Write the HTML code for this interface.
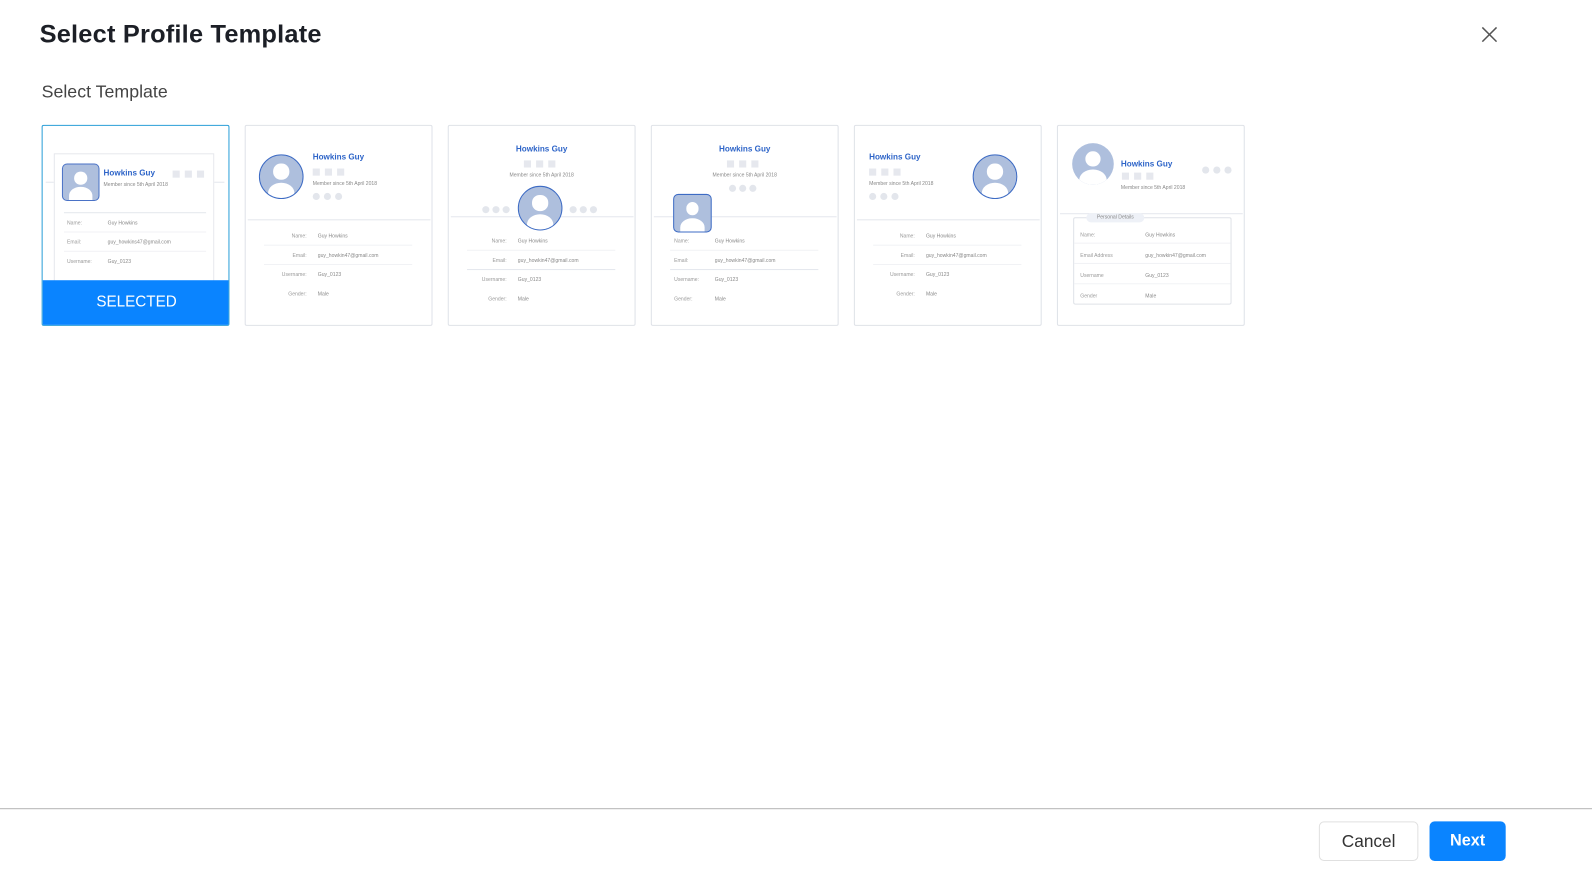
<!DOCTYPE html>
<html><head><meta charset="utf-8"><style>
*{margin:0;padding:0;box-sizing:border-box}
body{width:1592px;height:872px;background:#fff;font-family:"Liberation Sans",sans-serif;position:relative;overflow:hidden;color:#222}
#w{position:absolute;left:0;top:0;width:1568px;height:859px;transform:scale(1.0153);transform-origin:0 0}
.a{position:absolute}
.card{position:absolute;top:123px;width:185px;height:198px;border:1px solid #dfe2e8;border-radius:2px;background:#fff;overflow:hidden}
.n{position:absolute;font-size:8px;font-weight:bold;color:#2d64c8;white-space:nowrap}
.m{position:absolute;font-size:5px;color:#888;white-space:nowrap}
.sq{position:absolute;width:7px;height:7px;background:#e6e8ee}
.ci{position:absolute;width:7px;height:7px;border-radius:50%;background:#e3e6ec}
.l{position:absolute;font-size:5px;color:#999;white-space:nowrap}
.v{position:absolute;font-size:5px;color:#888;white-space:nowrap}
.ln{position:absolute;height:1px;background:#e4e7ed}
.lf{position:absolute;height:1px;background:#f1f2f5}
.av{position:absolute;background:#aebfdd;overflow:hidden}
.av:before{content:"";position:absolute;left:32%;top:20%;width:36%;height:36%;border-radius:50%;background:#fff}
.av:after{content:"";position:absolute;left:18%;top:64%;width:64%;height:50%;border-radius:50% 50% 0 0;background:#fff}
.r{text-align:right}
</style></head><body><div id="w">
<div class="a" style="left:39px;top:20px;font-size:25px;font-weight:bold;color:#1c1f26;letter-spacing:0.2px">Select Profile Template</div>
<svg class="a" style="left:1459px;top:26px" width="16" height="16" viewBox="0 0 16 16"><path d="M1 1L15 15M15 1L1 15" stroke="#555" stroke-width="1.5"/></svg>
<div class="a" style="left:41px;top:80px;font-size:17.5px;color:#444">Select Template</div>

<!-- Card 1 -->
<div class="card" style="left:41px;border-color:#2a9fd8">
 <div class="ln" style="left:3px;top:55px;width:176px"></div>
 <div class="a" style="left:11px;top:27px;width:158px;height:180px;border:1px solid #e6e8ed;background:#fff"></div>
 <div class="av" style="left:19px;top:37px;width:37px;height:37px;border-radius:5px;border:1px solid #4a72c6"></div>
 <div class="n" style="left:60px;top:42px">Howkins Guy</div>
 <div class="m" style="left:60px;top:55px">Member since 5th April 2018</div>
 <div class="sq" style="left:128px;top:44px"></div><div class="sq" style="left:140px;top:44px"></div><div class="sq" style="left:152px;top:44px"></div>
 <div class="ln" style="left:21px;top:85px;width:140px"></div>
 <div class="l" style="left:24px;top:93px">Name:</div><div class="v" style="left:64px;top:93px">Guy Howkins</div>
 <div class="lf" style="left:21px;top:104px;width:140px"></div>
 <div class="l" style="left:24px;top:112px">Email:</div><div class="v" style="left:64px;top:112px">guy_howkins47@gmail.com</div>
 <div class="lf" style="left:21px;top:123px;width:140px"></div>
 <div class="l" style="left:24px;top:131px">Username:</div><div class="v" style="left:64px;top:131px">Guy_0123</div>
 <div class="a" style="left:0;top:152px;width:185px;height:46px;background:#0a84ff;color:#fff;font-size:15px;text-align:center;line-height:44px">SELECTED</div>
</div>

<!-- Card 2 -->
<div class="card" style="left:241px">
 <div class="av" style="left:13px;top:28px;width:44px;height:44px;border-radius:50%;border:1px solid #3d6bc4"></div>
 <div class="n" style="left:66px;top:26px">Howkins Guy</div>
 <div class="sq" style="left:66px;top:42px"></div><div class="sq" style="left:78px;top:42px"></div><div class="sq" style="left:90px;top:42px"></div>
 <div class="m" style="left:66px;top:54px">Member since 5th April 2018</div>
 <div class="ci" style="left:66px;top:66px"></div><div class="ci" style="left:77px;top:66px"></div><div class="ci" style="left:88px;top:66px"></div>
 <div class="ln" style="left:2px;top:92px;width:180px"></div>
 <div class="l r" style="left:0;width:60px;top:106px">Name:</div><div class="v" style="left:71px;top:106px">Guy Howkins</div>
 <div class="lf" style="left:18px;top:117px;width:146px"></div>
 <div class="l r" style="left:0;width:60px;top:125px">Email:</div><div class="v" style="left:71px;top:125px">guy_howkin47@gmail.com</div>
 <div class="lf" style="left:18px;top:136px;width:146px"></div>
 <div class="l r" style="left:0;width:60px;top:144px">Username:</div><div class="v" style="left:71px;top:144px">Guy_0123</div>
 <div class="l r" style="left:0;width:60px;top:163px">Gender:</div><div class="v" style="left:71px;top:163px">Male</div>
</div>

<!-- Card 3 -->
<div class="card" style="left:441px">
 <div class="n" style="left:0;width:183px;text-align:center;top:18px">Howkins Guy</div>
 <div class="sq" style="left:74px;top:34px"></div><div class="sq" style="left:86px;top:34px"></div><div class="sq" style="left:98px;top:34px"></div>
 <div class="m" style="left:0;width:183px;text-align:center;top:46px">Member since 5th April 2018</div>
 <div class="ln" style="left:2px;top:89px;width:180px"></div>
 <div class="ci" style="left:33px;top:79px"></div><div class="ci" style="left:43px;top:79px"></div><div class="ci" style="left:53px;top:79px"></div>
 <div class="ci" style="left:119px;top:79px"></div><div class="ci" style="left:129px;top:79px"></div><div class="ci" style="left:139px;top:79px"></div>
 <div class="av" style="left:68px;top:59px;width:44px;height:44px;border-radius:50%;border:1px solid #3d6bc4"></div>
 <div class="l r" style="left:0;width:57px;top:111px">Name:</div><div class="v" style="left:68px;top:111px">Guy Howkins</div>
 <div class="lf" style="left:18px;top:122px;width:146px"></div>
 <div class="l r" style="left:0;width:57px;top:130px">Email:</div><div class="v" style="left:68px;top:130px">guy_howkin47@gmail.com</div>
 <div class="ln" style="left:18px;top:141px;width:146px"></div>
 <div class="l r" style="left:0;width:57px;top:149px">Username:</div><div class="v" style="left:68px;top:149px">Guy_0123</div>
 <div class="l r" style="left:0;width:57px;top:168px">Gender:</div><div class="v" style="left:68px;top:168px">Male</div>
</div>

<!-- Card 4 -->
<div class="card" style="left:641px">
 <div class="n" style="left:0;width:183px;text-align:center;top:18px">Howkins Guy</div>
 <div class="sq" style="left:74px;top:34px"></div><div class="sq" style="left:86px;top:34px"></div><div class="sq" style="left:98px;top:34px"></div>
 <div class="m" style="left:0;width:183px;text-align:center;top:46px">Member since 5th April 2018</div>
 <div class="ci" style="left:76px;top:58px"></div><div class="ci" style="left:86px;top:58px"></div><div class="ci" style="left:96px;top:58px"></div>
 <div class="ln" style="left:2px;top:89px;width:180px"></div>
 <div class="av" style="left:21px;top:67px;width:38px;height:38px;border-radius:5px;border:1px solid #3d6bc4"></div>
 <div class="l" style="left:22px;top:111px">Name:</div><div class="v" style="left:62px;top:111px">Guy Howkins</div>
 <div class="lf" style="left:18px;top:122px;width:146px"></div>
 <div class="l" style="left:22px;top:130px">Email:</div><div class="v" style="left:62px;top:130px">guy_howkin47@gmail.com</div>
 <div class="ln" style="left:18px;top:141px;width:146px"></div>
 <div class="l" style="left:22px;top:149px">Username:</div><div class="v" style="left:62px;top:149px">Guy_0123</div>
 <div class="l" style="left:22px;top:168px">Gender:</div><div class="v" style="left:62px;top:168px">Male</div>
</div>

<!-- Card 5 -->
<div class="card" style="left:841px">
 <div class="n" style="left:14px;top:26px">Howkins Guy</div>
 <div class="sq" style="left:14px;top:42px"></div><div class="sq" style="left:26px;top:42px"></div><div class="sq" style="left:38px;top:42px"></div>
 <div class="m" style="left:14px;top:54px">Member since 5th April 2018</div>
 <div class="ci" style="left:14px;top:66px"></div><div class="ci" style="left:25px;top:66px"></div><div class="ci" style="left:36px;top:66px"></div>
 <div class="av" style="left:116px;top:28px;width:44px;height:44px;border-radius:50%;border:1px solid #3d6bc4"></div>
 <div class="ln" style="left:2px;top:92px;width:180px"></div>
 <div class="l r" style="left:0;width:59px;top:106px">Name:</div><div class="v" style="left:70px;top:106px">Guy Howkins</div>
 <div class="lf" style="left:18px;top:117px;width:146px"></div>
 <div class="l r" style="left:0;width:59px;top:125px">Email:</div><div class="v" style="left:70px;top:125px">guy_howkin47@gmail.com</div>
 <div class="lf" style="left:18px;top:136px;width:146px"></div>
 <div class="l r" style="left:0;width:59px;top:144px">Username:</div><div class="v" style="left:70px;top:144px">Guy_0123</div>
 <div class="l r" style="left:0;width:59px;top:163px">Gender:</div><div class="v" style="left:70px;top:163px">Male</div>
</div>

<!-- Card 6 -->
<div class="card" style="left:1041px">
 <div class="av" style="left:14px;top:17px;width:41px;height:41px;border-radius:50%"></div>
 <div class="n" style="left:62px;top:33px">Howkins Guy</div>
 <div class="sq" style="left:63px;top:46px"></div><div class="sq" style="left:75px;top:46px"></div><div class="sq" style="left:87px;top:46px"></div>
 <div class="m" style="left:62px;top:58px">Member since 5th April 2018</div>
 <div class="ci" style="left:142px;top:40px"></div><div class="ci" style="left:153px;top:40px"></div><div class="ci" style="left:164px;top:40px"></div>
 <div class="ln" style="left:2px;top:86px;width:180px"></div>
 <div class="a" style="left:15px;top:90px;width:156px;height:86px;border:1px solid #dfe2e8;border-radius:2px"></div>
 <div class="a" style="left:28px;top:86px;width:57px;height:9px;border-radius:5px;background:#eef1f7;font-size:5px;color:#888;text-align:center;line-height:9px">Personal Details</div>
 <div class="l" style="left:22px;top:105px">Name:</div><div class="v" style="left:86px;top:105px">Guy Howkins</div>
 <div class="lf" style="left:16px;top:115px;width:154px"></div>
 <div class="l" style="left:22px;top:125px">Email Address</div><div class="v" style="left:86px;top:125px">guy_howkin47@gmail.com</div>
 <div class="lf" style="left:16px;top:135px;width:154px"></div>
 <div class="l" style="left:22px;top:145px">Username</div><div class="v" style="left:86px;top:145px">Guy_0123</div>
 <div class="lf" style="left:16px;top:155px;width:154px"></div>
 <div class="l" style="left:22px;top:165px">Gender</div><div class="v" style="left:86px;top:165px">Male</div>
</div>

<div class="a" style="left:0;top:796px;width:1592px;height:1px;background:#b5b5b5"></div>
<div class="a" style="left:1299px;top:809px;width:98px;height:39px;border:1px solid #e0e0e0;border-radius:5px;font-size:17px;color:#333;text-align:center;line-height:37px">Cancel</div>
<div class="a" style="left:1408px;top:809px;width:75px;height:39px;background:#0a84ff;border-radius:5px;font-size:16px;font-weight:bold;color:#fff;text-align:center;line-height:39px">Next</div>
</div></body></html>
